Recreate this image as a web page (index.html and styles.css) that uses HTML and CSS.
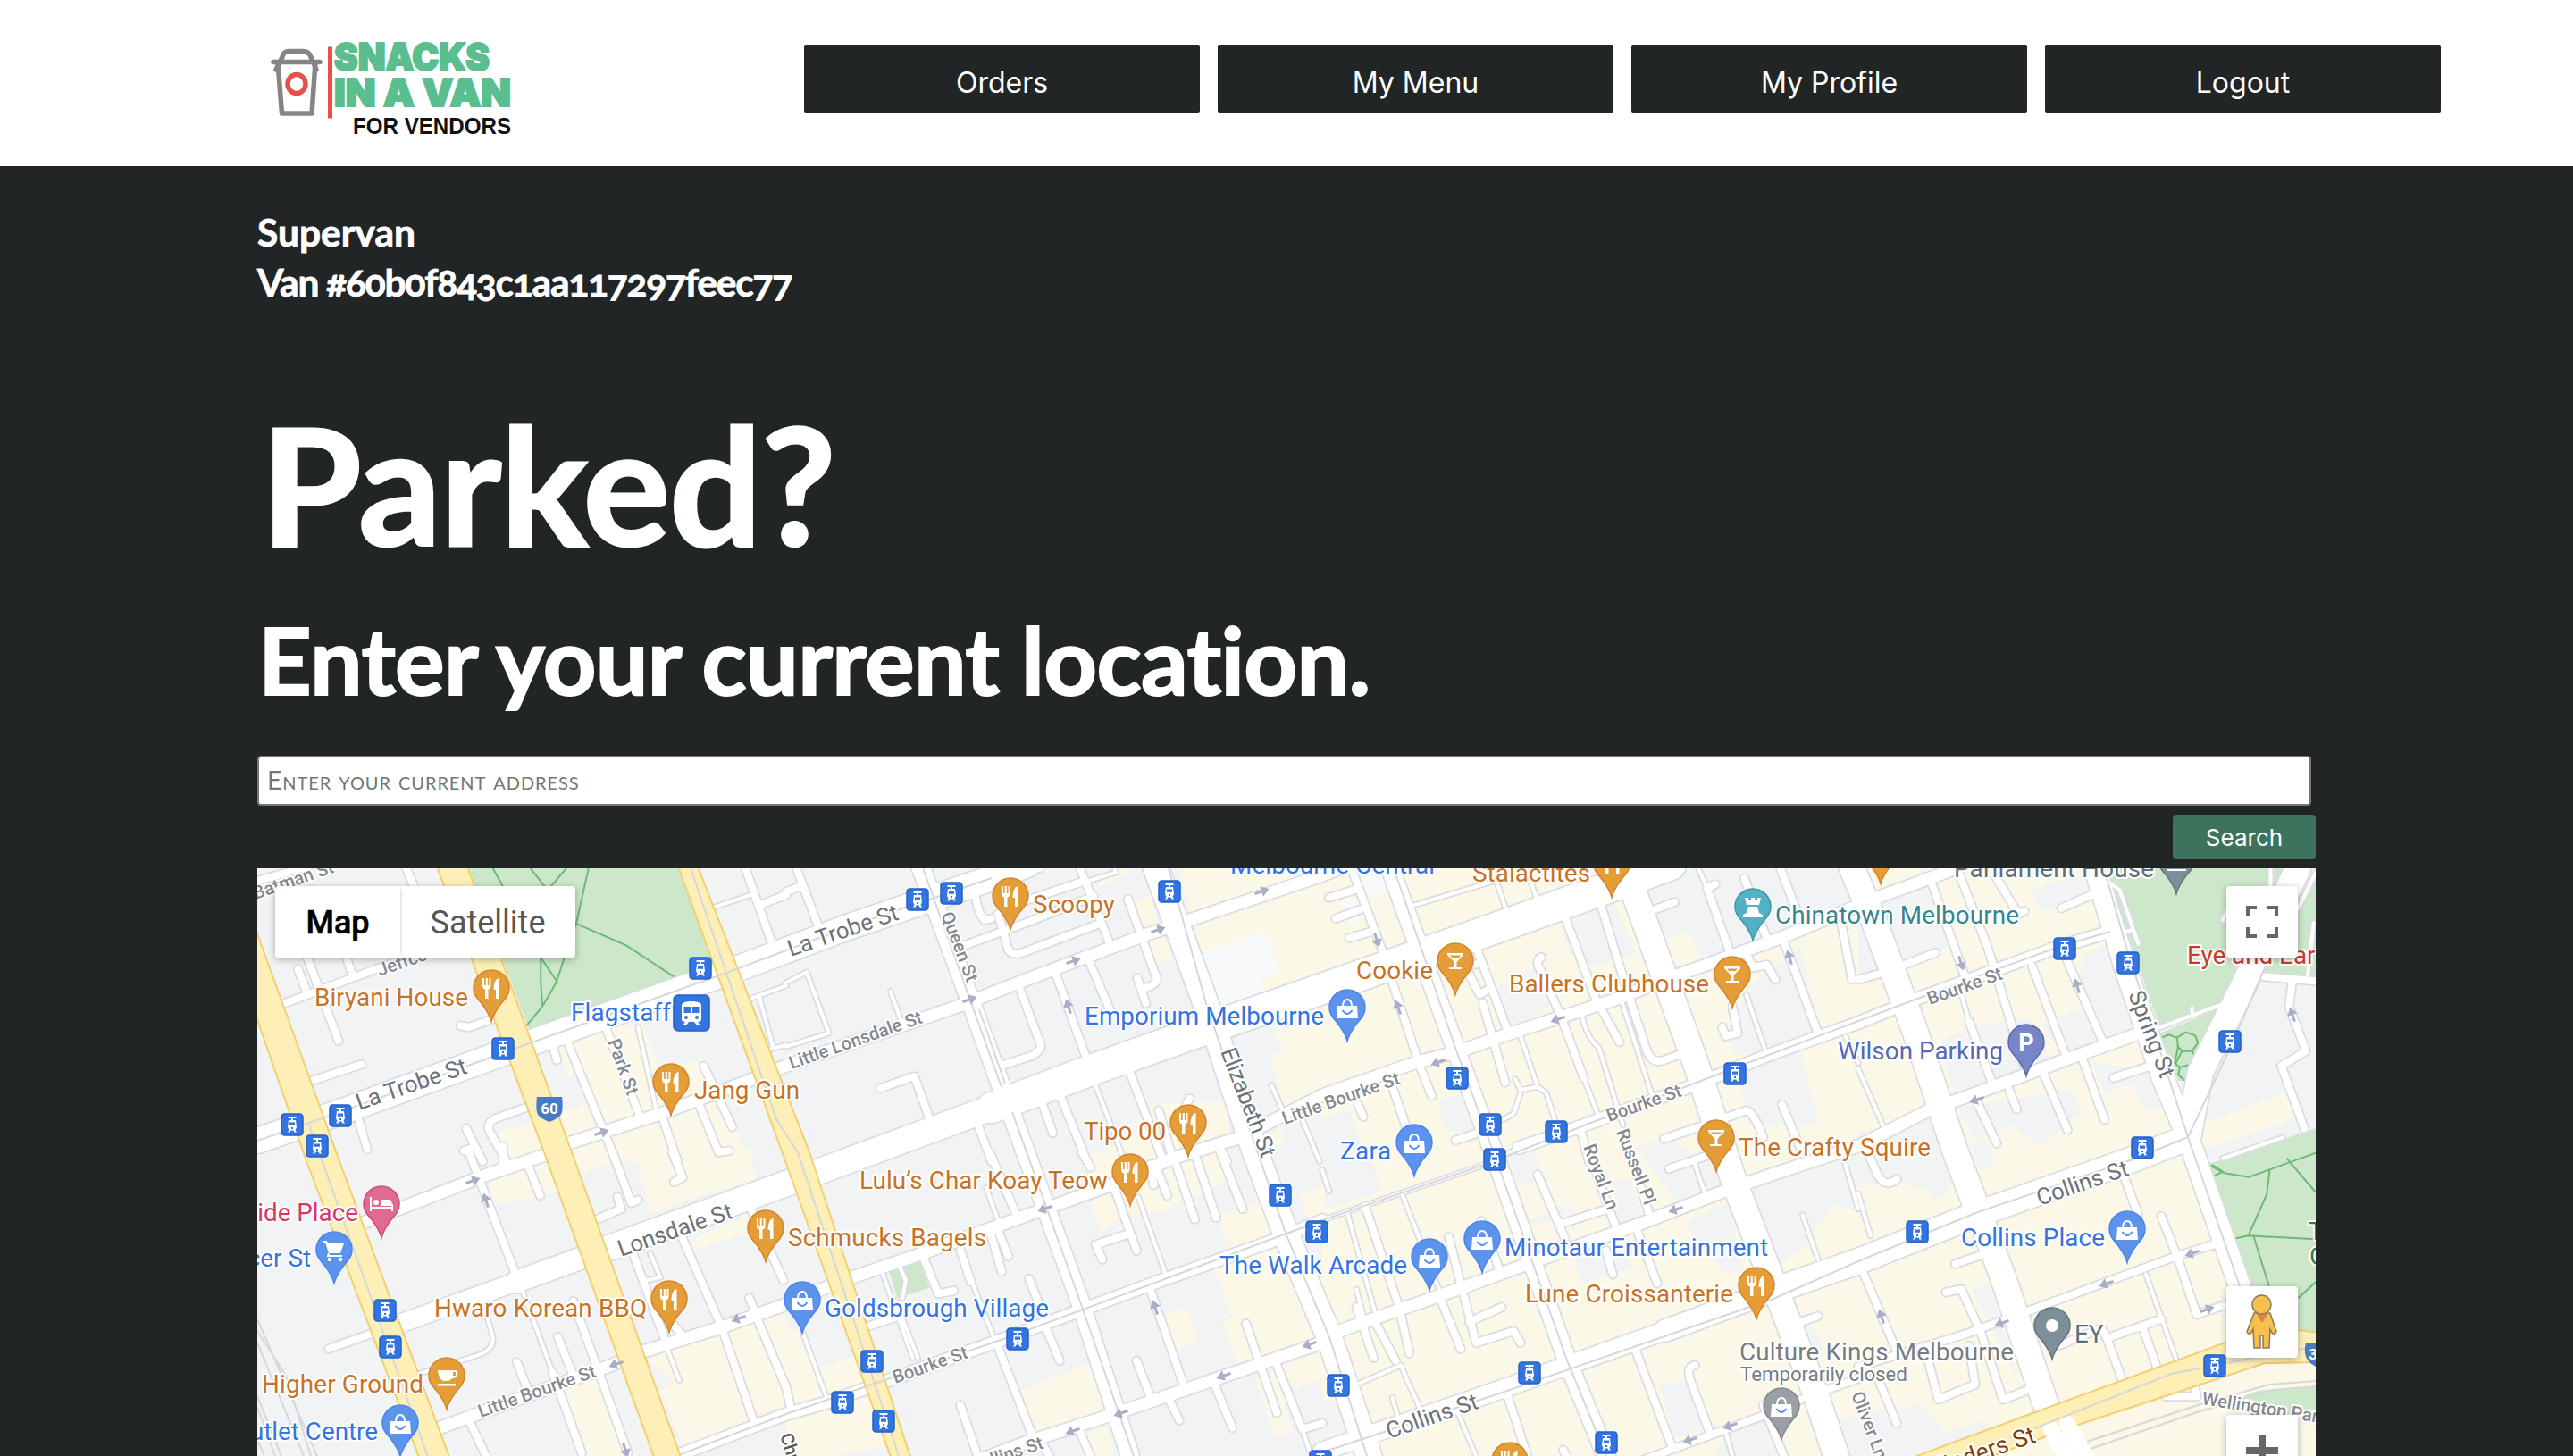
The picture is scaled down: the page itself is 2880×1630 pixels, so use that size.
FILE: index.html
```html
<!DOCTYPE html>
<html lang="en">
<head>
<meta charset="utf-8">
<title>Snacks in a Van - Vendors</title>
<link rel="stylesheet" href="styles.css">
</head>
<body>
<header class="header">
  <svg class="logo" viewBox="288 30 300 130" role="img" aria-label="Snacks in a Van for vendors">
    <g class="cup">
      <path d="M309 78 L316 64 Q317 57.500 324 57.500 H339 Q346 57.500 348 64 L354 78"/>
      <path d="M306 69.500 H358"/>
      <path d="M311 70 L315.500 127 H349 L353 70"/>
    </g>
    <ellipse class="cup-dot" cx="332" cy="94" rx="10" ry="10.500"/>
    <rect class="bar" x="367" y="52.500" width="5" height="80"/>
    <text class="brand" x="374" y="79" textLength="174" lengthAdjust="spacingAndGlyphs">SNACKS</text>
    <text class="brand" x="374" y="119" textLength="198" lengthAdjust="spacingAndGlyphs">IN A VAN</text>
    <text class="tagline" x="395" y="149.500" textLength="177" lengthAdjust="spacingAndGlyphs">FOR VENDORS</text>
  </svg>
  <nav class="nav">
    <a class="nav-item">Orders</a>
    <a class="nav-item">My Menu</a>
    <a class="nav-item">My Profile</a>
    <a class="nav-item">Logout</a>
  </nav>
</header>
<main class="content">
  <h3 class="van">Supervan<br><span class="van-id">Van #60b0f843c1aa117297feec77</span></h3>
  <h1 class="title">Parked?</h1>
  <h2 class="subtitle">Enter your current location.</h2>
  <input class="address" type="text" placeholder="Enter your current address">
  <button class="search">Search</button>
  <section class="map">
    <svg class="map-canvas" viewBox="288 972 2304 658">
      <defs>
        <path id="pin" d="M0 37.500 C-2 30 -5 26 -9 20 C-14 13 -20 9 -20 0 A20 20 0 0 1 20 0 C20 9 14 13 9 20 C5 26 2 30 0 37.500Z"/>
        <g id="food"><path d="M-10 -11 V-3 Q-10 1 -7 1.500 V12 H-3.500 V1.500 Q-.5 1 -.5 -3 V-11 H-2.500 V-3 H-4.200 V-11 H-6.300 V-3 H-8 V-11Z M8 -11 Q2.500 -9 2.500 2 H5 V12 H8.500 V-11Z"/></g>
        <g id="drink"><path d="M-9 -9 H9 V-7 L1.500 1 V7 H7 V9 H-7 V7 H-1.500 V1 L-9 -7Z"/><path class="cut" d="M-6 -6.500 H6 L4 -4 H-4Z"/></g>
        <g id="bag"><path d="M-11 -2 H11 L12 12 H-12Z"/><path class="line" d="M-5 -1 Q-5 -9 0 -9 Q5 -9 5 -1"/><path class="smile" d="M-5.500 3 Q0 11 5.500 3"/></g>
        <g id="cart"><path d="M-12 -10 H-8 L-7 -7 H11 L7 4 H-6 L-10 -8 H-12Z"/><path class="line" d="M-6 4 L-7 7 H9"/><circle cx="-5" cy="11" r="2.300"/><circle cx="7" cy="11" r="2.300"/></g>
        <g id="bed"><path d="M-13 -8 H-11 V3 H11 V0 H13 V8 H11 V6 H-11 V8 H-13Z M-1 2 V-5 H8 Q12 -5 12 2Z"/><circle cx="-6" cy="-2" r="3"/></g>
        <g id="coffee"><path d="M-10 -6 H11 Q13 -6 12 0 Q11 3 6 3 Q4 6 0 6 H-3 Q-9 5 -10 -6Z M-10 9 H10 V11.500 H-10Z"/><path class="cut" d="M7 -4 H10 V0 H7Z"/></g>
        <g id="castle"><path d="M-9 -10 H-5 V-7 H-2 V-10 H2 V-7 H5 V-10 H9 L7 -2 H-7Z M-5 0 H5 L7 7 L11 9 V12 H-11 V9 L-7 7Z"/></g>
        <g id="tram"><rect class="tram-box" x="-12" y="-12" width="24" height="24" rx="3.500"/><path class="glyph" fill-rule="evenodd" d="M-4.500 -9 H4.500 V-7 H1 V-5 H4 L5 3 L3.500 6 L5 8.500 H2.500 L1.500 6.500 H-1.500 L-2.500 8.500 H-5 L-3.500 6 L-5 3 L-4 -5 H-1 V-7 H-4.500Z M-3 -2.500 V.8 H3 V-2.500Z M-1 3 V5 H1 V3Z"/></g>
        <path id="way" d="M-8 -1.500 H0 V-6 L9 0 L0 6 V1.500 H-8Z"/>
      </defs>

      <rect class="land" x="288" y="972" width="2304" height="658"/>

      <!-- retail blocks and parks, one group per map tile -->
      <g transform="translate(280 960) scale(.38265 .33333)">
        <path class="retail" d="M1000 580 1150 560 1195 700 1335 680 1460 1020H760L725 925 990 825 960 720 930 740 900 640 1000 600Z"/>
        <path class="park" d="M638 36H1255L1362 365 820 590Z"/>
        <path class="trail" d="M710 36 760 140M820 36 870 110 925 36M990 36 955 215 895 420 855 500 808 565M850 300V420L855 500M840 320 900 420M950 220 1100 295 1252 410"/>
      </g>
      <g transform="translate(280 1290) scale(.38265 .33333)">
        <path class="retail" d="M690 60 720 40 880 10 900 135 785 165 710 175ZM970 80 1130 30 1460 -20 1480 90 1300 150 1170 210 1135 35ZM1290 290 1470 210 1480 260 1300 330ZM890 800 1030 740 1130 1020H960ZM1160 690 1568 540V880L1270 1000 1200 800 1240 780ZM725 -60 1200 -40 960 80 740 -20Z"/>
      </g>
      <g transform="translate(880 960) scale(.38265 .33333)">
        <path class="retail" d="M950 36H1000L990 60 910 100ZM1010 150 1060 130 1130 340 1060 370ZM1150 36H1568V390L1400 450 1385 410 1440 385 1405 245 1215 320 1190 220ZM1420 590 1568 530V820L1460 850 1415 670 1460 640ZM1065 830 1280 820 1300 930 1200 1020H880L980 950ZM1400 930 1450 910 1460 960 1410 980Z"/>
        <path class="mall" d="M1215 320 1405 245 1440 385 1385 410 1400 450 1270 500Z"/>
      </g>
      <g transform="translate(880 1290) scale(.38265 .33333)">
        <path class="retail" d="M885 0H1290L1300 90 1100 200 1010 210 920 265 885 150ZM1265 210 1400 160 1440 280 1290 320ZM1500 140 1568 110V240L1530 250ZM1250 390 1440 320 1540 620 1320 710 1275 570 1305 555ZM1105 545 1170 515 1205 630 1145 660ZM685 800 880 710 945 870 730 950ZM0 590 40 600 110 830 0 870ZM95 725 210 680 240 780 125 820ZM0 900 240 820 290 990 120 1020H0ZM1370 760 1440 730 1480 940 1430 950ZM1450 720 1568 670V760L1490 800ZM870 950 940 920 960 1020H890Z"/>
        <path class="park" d="M300 395 390 360 418 455 325 490Z"/>
      </g>
      <g transform="translate(1480 960) scale(.38265 .33333)">
        <path class="retail" d="M0 36H1568V1020H0Z"/>
        <path class="land" d="M710 200 840 130 920 320 780 370 710 300ZM500 440 640 360 690 480 550 580ZM930 90 1080 36H1568V180L1350 270 1200 330 1000 390ZM1240 440 1400 300 1460 590 1210 670 1190 620ZM1210 690 1400 650 1450 900 1250 900ZM340 820 420 790 460 920 360 920ZM0 880 80 850 130 1020H0ZM890 990 1000 940 1100 1000 900 1020Z"/>
        <path class="retail" d="M1000 280 1075 250 1110 340 1020 370ZM1400 320 1568 250V560L1460 590Z"/>
        <path class="mall" d="M100 36H170L190 110 120 130ZM50 150 95 140 110 230 80 230Z"/>
      </g>
      <g transform="translate(1480 1290) scale(.38265 .33333)">
        <path class="retail" d="M0 0H1568V1020H0Z"/>
        <path class="land" d="M0 0H140L170 130 10 190ZM540 0H620L650 90 570 110ZM600 230 730 175 740 205 610 245ZM720 300 850 250 910 390 760 440ZM850 100 900 90 940 220 870 240ZM930 0H1180V110L1040 170ZM1060 240 1190 170 1230 400 1170 400ZM1240 100 1520 0H1568V200L1500 170 1400 330 1330 380ZM0 840 50 830 80 960 0 1000ZM985 780 1070 770 1120 930 1030 960ZM1180 940 1300 900 1340 1020H1150ZM1410 590 1440 580 1470 680 1440 670ZM1520 900 1568 880V1020H1530Z"/>
      </g>
      <g transform="translate(2080 900) scale(.34439 .33333)">
        <path class="retail" d="M0 216H780L1060 1120 1000 1170H0Z"/>
        <path class="land" d="M75 335 220 280 300 480 150 530ZM560 290 720 240 760 310 590 360ZM740 500 820 470 930 760 810 810 710 590ZM590 740 720 690 780 800 680 850ZM260 800 390 740 560 720 640 880 320 990ZM320 1020 700 960 720 1040 590 1150 500 1080 380 1130ZM760 870 980 900 1010 1020 930 1030 890 940 800 970ZM0 1100 230 1060 330 1170H0ZM0 380 60 360 120 540 0 580Z"/>
        <path class="park" d="M790 216H1395L1240 560 1190 670 980 750 890 480 820 300ZM1487 216V590L1310 565 1430 330ZM980 770 1190 680 1080 930 1040 930Z"/>
        <path class="retail" d="M1100 1080 1390 970 1420 1060 1090 1170H1060Z"/>
        <path class="trail" d="M985 785 1010 775 1035 785 1040 815 1028 870 1045 885 1040 910 1065 932 1085 910 1095 885 1072 877 1045 885M1035 785 1065 767 1095 778 1104 802 1085 830H1052L1035 810M1085 830 1102 865 1095 885M1052 830 1030 875"/>
      </g>
      <g transform="translate(2080 1280) scale(.34439 .33333)">
        <path class="retail" d="M0 0H1070L1250 600 1487 632V820L800 1050H0Z"/>
        <path class="land" d="M0 -20H270L305 130 270 180 240 185 225 145 190 155 170 130 0 140ZM360 0H430L445 70 400 90ZM370 490 425 470 550 900 500 760ZM0 910 210 875 280 970 410 930 430 960 170 1050H0Z"/>
        <path class="park" d="M1135 70 1487 -50V635L1430 628 1260 480ZM1250 850 1300 830 1487 815V900L1400 910Z"/>
        <path class="retail" d="M720 1050 1180 880 1487 950V1050Z"/>
        <path class="trail" d="M1140 72 1190 100 1270 113 1487 32M1392 50 1487 165M1337 90 1328 170 1268 310 1487 322M1268 310 1222 320M1285 312 1335 480M1487 465 1430 520M1155 110 1185 95 1150 72"/>
      </g>

      <g id="rails" class="rail">
        <path d="M288 1477 355 1630M288 1503 340 1630M288 1490 320 1540 348 1630M288 1563 315 1630M288 1575 308 1630M288 1612 296 1630M2336 1614 2460 1573 2540 1550 2592 1546M2340 1622 2462 1580 2544 1556 2592 1552"/>
      </g>

      <!-- streets: painted once as casing, once as surface -->
      <g class="casing"><g id="streets" class="street">
        <g class="alley">
          <g transform="translate(280 960) scale(.38265 .33333)">
            <path d="M100 490 380 370 700 240M0 85 170 30M165 330 258 615M140 375 165 450M280 330 300 400M455 30 480 100M615 565 640 570 715 540M180 750 325 695M310 850 342 980M820 835 720 875Q690 890 700 920L750 1020M632 910 680 1020M625 985 650 975M885 630 897 680M925 610 1070 1020M1040 570 1140 870M1205 870 1250 1020M1327 700 1410 905M1310 820 1370 990 1400 985M1450 40 1530 300M1490 160 1568 125"/>
            <path class="thin" d="M1135 570 1190 860M1350 170 1465 125M1450 480 1568 430M1490 470 1530 640M1500 650 1568 630"/>
          </g>
          <g transform="translate(280 1290) scale(.38265 .33333)">
            <path d="M230 660 400 590M640 0 780 420M740 -20 740 40M815 50 848 145M1060 0 1115 170 1135 160M1075 150 1085 190 1015 225M1235 0 1265 85 1240 100M1120 340 1220 650M1265 290 1380 590 1475 910M1225 560 1260 610M1465 190 1560 430M1480 550 1568 790M1460 490 1475 530M885 740 970 1010M945 500 1105 1010M900 620 945 750M780 705 820 820M640 900 690 1020"/>
            <path class="thin" d="M1170 340 1200 420 1160 430M1220 660 1255 765M795 460 885 740M690 540 710 620Q715 660 670 680L490 745"/>
          </g>
          <g transform="translate(880 960) scale(.38265 .33333)">
            <path d="M30 36 100 250M0 115 45 95M550 105Q560 190 580 210L600 205M620 190 650 310Q660 330 690 320L910 225M510 300 700 220 900 130M700 145 870 80M860 36 950 300M530 110 740 36M1000 140 1085 410Q1080 430 1045 440M1027 405 1052 490M275 775 375 735 420 880M680 430 745 630Q745 650 720 665L640 695M790 395 880 680M885 345 950 520M750 830 780 925M805 810 880 1020M1005 720 1100 1010M1090 850 1130 1010M1180 810 1170 830 1200 930M1260 960 1290 1020M565 910 600 1020"/>
            <path class="thin" d="M305 450 340 560M0 420 60 385 125 590 0 635M880 80 965 50 960 36M905 765 990 1020M1420 765 1460 870M1510 880 1560 1020"/>
          </g>
          <g transform="translate(880 1290) scale(.38265 .33333)">
            <path d="M595 0 670 200M615 250 650 350M595 260 630 400M510 330 540 435M400 350 445 475 490 465M225 590 330 550M710 425 740 510M615 640 730 980M760 590 800 700M510 850 560 1020M0 790 15 870M865 0 890 50M960 120 1025 330M1000 275 905 310 925 360M1065 460 1165 790M1025 700 1065 820M1120 830 1150 900M1250 770 1305 925M1345 575 1435 875M1430 700 1510 930 1568 910M1065 40 1075 110M1085 60 1115 145M1140 40 1195 225M1200 20 1258 220M1270 0 1335 190M860 940 890 1020M750 980 770 1020"/>
            <path class="thin" d="M585 120 620 230M545 440 610 630M330 380 350 430 340 490M280 400 370 690M320 500 385 690M50 610 120 830M1030 150 1110 410M1510 930 1530 1000"/>
          </g>
          <g transform="translate(1480 960) scale(.38265 .33333)">
            <path d="M85 36 175 310M200 400 285 700 320 800M20 135 90 110M40 205 110 175M80 270 140 250M705 185 800 475 870 620M810 140 890 440 950 650Q965 695 1000 680L1050 660M450 300 545 590M425 380 460 460 490 440M440 360 465 355M470 490 535 755M640 335Q620 350 640 380L700 540 765 740M390 950 480 915M205 770 250 920M105 830 120 870M960 180 1030 150M1125 100 1190 310M1130 100 1150 90M1235 70 1300 270M1340 36 1385 170M1240 320 1260 370 1300 360 1325 410M1350 280 1450 590M1200 500 1215 590 1180 600 1170 570M1000 945 1240 850Q1260 850 1290 940M1345 830 1400 980M1520 230 1550 410M755 910 780 1020"/>
            <path class="thin" d="M240 170 500 80M510 80 535 165M610 80 625 130M765 740 805 860M760 530Q770 600 810 640L880 900M875 480 965 800M580 600 630 770 580 780 565 745M630 770 655 790 680 880M580 790 560 860 530 880M1240 460 1300 660M1100 36 1125 100M1530 600 1568 690"/>
          </g>
          <g transform="translate(1480 1290) scale(.38265 .33333)">
            <path d="M125 180 225 520 255 675M345 490 405 660M150 560 215 700M370 285 450 640 560 600 580 640M430 570 525 520M465 230 520 400M100 520 150 690M540 810 600 1020M630 75 710 290M700 240 835 190M780 0 865 270M900 0 960 220M920 260 980 440M830 330 850 410M915 660 1020 980M1090 715Q1065 720 1075 760L1130 930M705 1000 715 1020M1015 55 1130 10M1400 570 1450 550M900 1050 1300 880 1400 830M1290 850 1350 1020M1470 800 1568 760 1590 750"/>
            <path class="thin" d="M75 210 160 560M235 145 345 470M100 460 120 550M100 780 230 715 250 770 290 870M205 825 225 900M395 870 450 1020M1090 40 1120 140M1405 210 1450 360M1530 40 1568 190M1180 940 1200 1020M0 60 20 130"/>
          </g>
          <g transform="translate(2080 900) scale(.34439 .33333)">
            <path d="M240 270 350 590M360 730 440 950M330 240 420 480 540 880M450 250 520 370 540 360M660 350 770 300M150 540 250 500M565 545 680 860M680 530 800 810M730 860 800 1060M600 900 680 1095M490 960 515 1025M390 1010 450 1140M830 920 950 880M0 590 70 570M1320 580 1487 595M1410 600 1400 680 1455 830 1375 880 1450 1090"/>
            <path class="thin" d="M330 620 360 730M0 890 80 1080M810 260 850 290 910 470M860 430 885 425M1487 230 1430 350M1480 400 1460 580M1340 216V280M1185 390 1200 360M1085 685V700M930 770 1190 670"/>
          </g>
          <g transform="translate(2080 1280) scale(.34439 .33333)">
            <path d="M30 30 65 110Q90 150 125 120M10 420 130 710M60 780 125 940M315 405 400 375M285 500 335 490 400 640 470 860 560 825M230 740 260 860 380 810 360 680M0 750 350 640 560 560 1030 380 1170 335M860 100 910 240M985 245 1040 390 1100 575 1200 540M650 680 790 620 810 660 860 800M820 650 985 590M925 620 970 750M1090 800 1100 850 1000 850"/>
            <path class="thin" d="M0 170 40 310M935 440 1035 730M1185 50 1380 -20"/>
          </g>
        </g>
        <!-- little streets -->
        <path class="lane" d="M404 1370 540 1317 610 1293M636 1280 739 1247 846 1207 880 1193 1071 1127 1148 1097 1278 1048 1480 980 1510 968M488 1600 685 1528 720 1513 804 1487 880 1460 945 1433 1033 1403 1159 1357 1240 1328 1312 1297 1389 1273 1480 1226 1583 1190 1633 1177 1690 1157 1805 1120 1874 1093 1993 1050 2106 1003 2190 972M1100 1633 1148 1615 1247 1583 1480 1503 1499 1490 1641 1440 1710 1415 1836 1370 1931 1333 1977 1317 2080 1283 2159 1243 2214 1223 2321 1183 2400 1155"/>
        <path class="lane" d="M762 1628 880 1583 926 1570 1129 1497 1209 1467 1301 1433 1431 1387 1480 1366M1700 1285 1786 1255 1901 1213 1977 1182 2080 1145 2149 1117 2242 1083 2304 1060 2362 1043"/>
        <path class="thin" d="M1480 1366 1664 1303 1700 1285"/>
        <!-- main streets -->
        <path class="w20" d="M1031 972 1086 1120 1121 1217 1148 1290 1209 1457 1265 1630M1556 972 1629 1173 1679 1310 1754 1523 1798 1630M433 1487 578 1435M1480 1625 1522 1610 1687 1553 1756 1528 1863 1490"/>
        <path class="w24" d="M2345 972 2380 1087 2421 1207 2449 1273 2507 1440M578 1435 682 1397M1863 1490 1985 1445"/>
        <path class="w28" d="M288 1277 381 1245 598 1166 816 1088 949 1038 1110 983 1150 968M1294 972 1351 1127 1405 1290 1440 1383 1488 1497 1528 1617 1533 1632M1822 980 1899 1193 1941 1323 1995 1463 2031 1557 2056 1632M682 1397 880 1325 1110 1240M2073 972 2096 1027 2142 1150 2189 1290 2242 1430 2290 1573M2572 972 2513 1100 2463 1200 2449 1275M1985 1445 2080 1412 2211 1360 2390 1297 2445 1275"/>
        <path class="w34" d="M1110 1240 1224 1197 1350 1152 1480 1107 1694 1032 1824 985 1870 968"/>
      </g></g>
      <use href="#streets" class="surface"/>

      <g class="highway">
        <path d="M284 1034 380 1300 504 1634H470L343 1300 284 1130Z"/>
        <path d="M489 970 609 1290 733 1634H763L640 1290 523 970Z"/>
        <path d="M759 970 878 1297 998 1634H1020L906 1290 781 970Z"/>
        <path d="M2140 1632 2275 1582 2491 1503 2572 1489 2596 1492V1525L2535 1526 2442 1557 2326 1595 2225 1632Z"/>
      </g>
      <g class="streets-over surface">
        <path class="w18" d="M2296 1600 2318 1640M2314 1594 2340 1640"/>
      </g>
      <path class="tramline" d="M288 1277 381 1245 598 1166 816 1088 949 1038 1110 983M346 1259 480 1634M773 972 869 1253 893 1290 1006 1630M762 1628 880 1583 1129 1497 1301 1433 1480 1366 1664 1303 1786 1255 1977 1182 2149 1117 2304 1060 2362 1043M1033 972 1121 1217M1096 1130 1125 1213M1133 1245 1209 1457 1269 1630M1308 972 1351 1127 1440 1383 1488 1497 1530 1630M1560 972 1629 1173 1679 1310 1754 1523 1798 1630M1480 1626 1687 1557 1756 1533 1985 1454 2080 1412 2211 1358 2390 1297 2449 1273 2500 1165 2545 1060M2355 972 2380 1060 2449 1273 2507 1440M2250 1610 2430 1538 2592 1507"/>

      <g class="ways">
        <g class="east">
          <use href="#way" transform="translate(673 1268) rotate(-19)"/><use href="#way" transform="translate(529 1322) rotate(-19)"/><use href="#way" transform="translate(1085 1119) rotate(-19)"/><use href="#way" transform="translate(1201 1076) rotate(-19)"/><use href="#way" transform="translate(1296 1041) rotate(-19)"/><use href="#way" transform="translate(1412 998) rotate(-19)"/><use href="#way" transform="translate(2470 1466) rotate(-19)"/>
        </g>
        <g class="west">
          <use href="#way" transform="translate(690 1527) rotate(161)"/><use href="#way" transform="translate(827 1476) rotate(161)"/><use href="#way" transform="translate(1170 1353) rotate(161)"/><use href="#way" transform="translate(1466 1505) rotate(161)"/><use href="#way" transform="translate(1370 1540) rotate(161)"/><use href="#way" transform="translate(1255 1582) rotate(161)"/><use href="#way" transform="translate(1201 1602) rotate(161)"/><use href="#way" transform="translate(1610 1189) rotate(161)"/><use href="#way" transform="translate(1744 1141) rotate(161)"/><use href="#way" transform="translate(1876 1354) rotate(161)"/><use href="#way" transform="translate(1937 1596) rotate(161)"/><use href="#way" transform="translate(1892 1612) rotate(161)"/><use href="#way" transform="translate(2213 1231) rotate(161)"/><use href="#way" transform="translate(2454 1403) rotate(161)"/><use href="#way" transform="translate(2358 1437) rotate(161)"/><use href="#way" transform="translate(2241 1481) rotate(161)"/>
        </g>
        <g class="north-south">
          <use href="#way" transform="translate(544 1344) rotate(-108)"/><use href="#way" transform="translate(1196 1127) rotate(-108)"/><use href="#way" transform="translate(1293 1464) rotate(-108)"/><use href="#way" transform="translate(1565 1128) rotate(-108)"/><use href="#way" transform="translate(2003 1072) rotate(-108)"/><use href="#way" transform="translate(2325 1104) rotate(-108)"/><use href="#way" transform="translate(2566 1136) rotate(-108)"/><use href="#way" transform="translate(2106 1474) rotate(-108)"/><use href="#way" transform="translate(700 1623) rotate(72)"/><use href="#way" transform="translate(1541 1052) rotate(72)"/><use href="#way" transform="translate(2195 1078) rotate(72)"/>
        </g>
      </g>

      <g class="road-label">
        <g class="large">
          <text transform="translate(402 1243) rotate(-19)">La Trobe St</text>
          <text transform="translate(885 1071) rotate(-19)">La Trobe St</text>
          <text transform="translate(1366 1177) rotate(69)" textLength="129">Elizabeth St</text>
          <text transform="translate(695 1407) rotate(-19)" textLength="134">Lonsdale St</text>
          <text transform="translate(2382 1113) rotate(69)" textLength="102">Spring St</text>
          <text transform="translate(1555 1611) rotate(-19)" textLength="107">Collins St</text>
          <text transform="translate(2283 1350) rotate(-19)" textLength="107">Collins St</text>
        </g>
        <g class="small">
          <text transform="translate(286 1007) rotate(-19)">Batman St</text>
          <text transform="translate(425 1093) rotate(-19)">Jeffcott St</text>
          <text transform="translate(886 1197) rotate(-19.500)">Little Lonsdale St</text>
          <text transform="translate(1053 1024) rotate(69)">Queen St</text>
          <text transform="translate(680 1166) rotate(70)">Park St</text>
          <text transform="translate(538 1587) rotate(-19.500)">Little Bourke St</text>
          <text transform="translate(1438 1259) rotate(-19.500)">Little Bourke St</text>
          <text transform="translate(1801 1256) rotate(-19.500)">Bourke St</text>
          <text transform="translate(1002 1549) rotate(-19.500)">Bourke St</text>
          <text transform="translate(2160 1125) rotate(-19.500)">Bourke St</text>
          <text transform="translate(1772 1284) rotate(69)">Royal Ln</text>
          <text transform="translate(1809 1267) rotate(69)">Russell Pl</text>
          <text transform="translate(1169 1621) rotate(-19)" text-anchor="end">Little Collins St</text>
          <text transform="translate(2072 1561) rotate(69)">Oliver Ln</text>
          <text transform="translate(2464 1572) rotate(9)">Wellington Parade</text>
          <text class="dark" transform="translate(873 1607) rotate(72)">Church Ln</text>
        </g>
        <text class="arterial" transform="translate(2280 1614) rotate(-19)" text-anchor="end">Flinders St</text>
      </g>

      <g class="trams">
        <use href="#tram" x="784" y="1084"/><use href="#tram" x="563" y="1174"/><use href="#tram" x="381" y="1249"/><use href="#tram" x="327" y="1259"/><use href="#tram" x="355" y="1283"/><use href="#tram" x="431" y="1467"/><use href="#tram" x="437" y="1508"/><use href="#tram" x="1027" y="1007"/><use href="#tram" x="1065" y="1000"/><use href="#tram" x="1309" y="998"/><use href="#tram" x="1139" y="1499"/><use href="#tram" x="976" y="1524"/><use href="#tram" x="943" y="1570"/><use href="#tram" x="989" y="1591"/><use href="#tram" x="1433" y="1338"/><use href="#tram" x="1474" y="1379"/><use href="#tram" x="1631" y="1207"/><use href="#tram" x="1668" y="1259"/><use href="#tram" x="1673" y="1298"/><use href="#tram" x="1742" y="1267"/><use href="#tram" x="1942" y="1202"/><use href="#tram" x="1498" y="1551"/><use href="#tram" x="1712" y="1537"/><use href="#tram" x="1798" y="1615"/><use href="#tram" x="1478" y="1636"/><use href="#tram" x="2311" y="1062"/><use href="#tram" x="2382" y="1078"/><use href="#tram" x="2496" y="1166"/><use href="#tram" x="2398" y="1285"/><use href="#tram" x="2146" y="1379"/><use href="#tram" x="2479" y="1529"/>
      </g>
      <g transform="translate(774 1134)">
        <rect class="tram-box" x="-20" y="-20" width="40" height="40" rx="5"/>
        <path class="glyph" fill-rule="evenodd" d="M-11 -9 Q-10 -13 0 -13 Q10 -13 11 -9 V7 Q11 10 7 10 L10 14 H6 L3 10 H-3 L-6 14 H-10 L-7 10 Q-11 10 -11 7Z M-8.500 -7 V0 H-1 V-7Z M1 -7 V0 H8.500 V-7Z M-8 5 a2 2 0 1 0 4 0 a2 2 0 1 0 -4 0 M4 5 a2 2 0 1 0 4 0 a2 2 0 1 0 -4 0"/>
      </g>
      <g class="shield"><path d="M601 1228H629Q631 1245 627 1249Q623 1253 615 1256Q607 1253 603 1249Q599 1245 601 1228Z"/><text x="615" y="1247" text-anchor="middle">60</text><path d="M2581 1503H2611V1530H2592Q2576 1522 2581 1503Z"/><text x="2584" y="1522">30</text></g>

      <g class="pins">
        <g class="orange">
          <g transform="translate(550 1106)"><use href="#pin"/><use href="#food" class="glyph"/></g>
          <g transform="translate(751 1211)"><use href="#pin"/><use href="#food" class="glyph"/></g>
          <g transform="translate(857 1375)"><use href="#pin"/><use href="#food" class="glyph"/></g>
          <g transform="translate(749 1454)"><use href="#pin"/><use href="#food" class="glyph"/></g>
          <g transform="translate(1131 1003)"><use href="#pin"/><use href="#food" class="glyph"/></g>
          <g transform="translate(1330 1257)"><use href="#pin"/><use href="#food" class="glyph"/></g>
          <g transform="translate(1265 1312)"><use href="#pin"/><use href="#food" class="glyph"/></g>
          <g transform="translate(1966 1439)"><use href="#pin"/><use href="#food" class="glyph"/></g>
          <g transform="translate(1804 967)"><use href="#pin"/><use href="#food" class="glyph"/></g>
          <g transform="translate(1690 1635)"><use href="#pin"/><use href="#food" class="glyph"/></g>
          <g transform="translate(2105 952)"><use href="#pin"/></g>
          <g transform="translate(500 1540)"><use href="#pin"/><use href="#coffee" class="glyph"/></g>
          <g transform="translate(1629 1076)"><use href="#pin"/><use href="#drink" class="glyph"/></g>
          <g transform="translate(1939 1091)"><use href="#pin"/><use href="#drink" class="glyph"/></g>
          <g transform="translate(1921 1274)"><use href="#pin"/><use href="#drink" class="glyph"/></g>
        </g>
        <g class="blue">
          <g transform="translate(448 1593)"><use href="#pin"/><use href="#bag" class="glyph"/></g>
          <g transform="translate(898 1455)"><use href="#pin"/><use href="#bag" class="glyph"/></g>
          <g transform="translate(1508 1128)"><use href="#pin"/><use href="#bag" class="glyph"/></g>
          <g transform="translate(1583 1279)"><use href="#pin"/><use href="#bag" class="glyph"/></g>
          <g transform="translate(1600 1407)"><use href="#pin"/><use href="#bag" class="glyph"/></g>
          <g transform="translate(1659 1387)"><use href="#pin"/><use href="#bag" class="glyph"/></g>
          <g transform="translate(2381 1376)"><use href="#pin"/><use href="#bag" class="glyph"/></g>
          <g transform="translate(374 1399)"><use href="#pin"/><use href="#cart" class="glyph"/></g>
        </g>
        <g class="gray" transform="translate(1994 1574)"><use href="#pin"/><use href="#bag" class="glyph"/></g>
        <g class="pink" transform="translate(427 1348)"><use href="#pin"/><use href="#bed" class="glyph"/></g>
        <g class="teal" transform="translate(1962 1015)"><use href="#pin"/><use href="#castle" class="glyph"/></g>
        <g class="indigo" transform="translate(2268 1167)"><use href="#pin"/><text class="p" x="0" y="10" text-anchor="middle">P</text></g>
        <g class="slate" transform="translate(2297 1484)"><use href="#pin"/><circle class="glyph" r="7"/></g>
        <g class="slate" transform="translate(2436 963)"><use href="#pin"/><path class="glyph" d="M-11 10H11V12H-11Z"/></g>
      </g>

      <g class="poi">
        <g class="t-orange">
          <text x="352" y="1126" textLength="172">Biryani House</text><text x="1156" y="1022" textLength="92">Scoopy</text><text x="777" y="1230" textLength="118">Jang Gun</text><text x="1213" y="1276" textLength="92">Tipo 00</text><text x="962" y="1331" textLength="278">Lulu’s Char Koay Teow</text><text x="882" y="1395" textLength="222">Schmucks Bagels</text><text x="486" y="1474" textLength="238">Hwaro Korean BBQ</text><text x="293" y="1559" textLength="181">Higher Ground</text><text x="1518" y="1096" textLength="86">Cookie</text><text x="1689" y="1111" textLength="224">Ballers Clubhouse</text><text x="1946" y="1294" textLength="215">The Crafty Squire</text><text x="1648" y="987" textLength="132">Stalactites</text><text x="1707" y="1458" textLength="233">Lune Croissanterie</text>
        </g>
        <g class="t-blue">
          <text x="639" y="1143" textLength="112">Flagstaff</text><text x="1214" y="1147" textLength="268">Emporium Melbourne</text><text x="923" y="1474" textLength="251">Goldsbrough Village</text><text x="348" y="1418" text-anchor="end">cer St</text><text x="423" y="1612" text-anchor="end">utlet Centre</text><text x="1500" y="1298" textLength="57">Zara</text><text x="1377" y="978" textLength="229">Melbourne Central</text><text x="1684" y="1406" textLength="295">Minotaur Entertainment</text><text x="1365" y="1426" textLength="210">The Walk Arcade</text><text x="2195" y="1395" textLength="161">Collins Place</text>
        </g>
        <text class="t-pink" x="401" y="1367" text-anchor="end">ide Place</text>
        <text class="t-teal" x="1987" y="1034" textLength="273">Chinatown Melbourne</text>
        <text class="t-indigo" x="2057" y="1186" textLength="185">Wilson Parking</text>
        <text class="t-slate" x="2187" y="982" textLength="224">Parliament House</text>
        <text class="t-slate" x="2322" y="1503">EY</text>
        <text class="t-red" x="2448" y="1079">Eye and Ear</text>
        <text class="t-gray" x="1947" y="1523" textLength="307">Culture Kings Melbourne</text>
        <text class="t-gray note" x="1948" y="1546" textLength="187">Temporarily closed</text>
        <text class="t-green" x="2584" y="1388">T</text><text class="t-green" x="2585" y="1416">G</text>
      </g>
    </svg>

    <div class="map-type"><span class="type active">Map</span><span class="type">Satellite</span></div>
    <div class="control fullscreen"><svg viewBox="0 0 36 36"><path d="M0 0H12V4H4V12H0ZM24 0H36V12H32V4H24ZM0 24H4V32H12V36H0ZM32 24H36V36H24V32H32Z"/></svg></div>
    <div class="control pegman"><svg viewBox="0 0 36 62">
      <path class="peg" d="M9 21H27L34 42Q32 46 29 43L27 39L26 60H19V46H16V60H9L8 39L6 43Q3 46 1 42Z"/><path class="peg-scarf" d="M11 21H25L18 32Z"/><circle class="peg" cx="17.500" cy="11.500" r="10.500"/></svg></div>
    <div class="control zoom"><svg viewBox="0 0 36 36"><path d="M14 0H22V14H36V22H22V36H14V22H0V14H14Z"/></svg></div>
  </section>
</main>
</body>
</html>
```
FILE: styles.css
```css
* { box-sizing: border-box; }
body {
  margin: 0;
  height: 100vh;
  overflow: hidden;
  display: flex;
  flex-direction: column;
  background: #212526;
  color: #fff;
  font-family: Lato, sans-serif;
}

.header {
  flex: none;
  height: 186px;
  padding: 30px 148px 0 288px;
  display: flex;
  justify-content: space-between;
  align-items: flex-start;
  background: #fff;
}
.logo { width: 300px; height: 130px; }
.cup { fill: none; stroke: #858585; stroke-width: 5.5; stroke-linecap: round; stroke-linejoin: round; }
.cup-dot { fill: none; stroke: #e8504a; stroke-width: 5.5; }
.bar { fill: #e8504a; }
.brand { font: 900 42px Inter, sans-serif; fill: #5abe8f; stroke: #5abe8f; stroke-width: 2; }
.tagline { font: bold 25px "Liberation Sans", sans-serif; fill: #111; }

.nav {
  width: 1832px;
  margin-top: 20px;
  display: grid;
  grid-template-columns: repeat(4, 1fr);
  gap: 20px;
}
.nav-item {
  height: 76px;
  padding-top: 8px;
  display: flex;
  align-items: center;
  justify-content: center;
  background: #212526;
  border-radius: 2px;
  font: 32px Inter, sans-serif;
}

.content {
  flex: 1;
  width: 2304px;
  margin: 0 auto;
  display: flex;
  flex-direction: column;
}
.van { margin: 46px 0 0; font-size: 42.500px; line-height: 56px; font-weight: 700; letter-spacing: 0; white-space: nowrap; -webkit-text-stroke: .8px #fff; }
.van-id { font-feature-settings: "onum"; letter-spacing: -1.2px; }
.title { margin: 87px 0 0 4px; font-size: 182px; line-height: 220px; letter-spacing: -.5px; -webkit-text-stroke: 3px #fff; }
.subtitle { margin: 22px 0 0 1px; font-size: 104px; line-height: 130px; letter-spacing: -.6px; white-space: nowrap; -webkit-text-stroke: 2px #fff; }
.address {
  flex: none;
  width: 2299px;
  height: 56px;
  margin-top: 43px;
  padding: 0 9px 3px;
  border: 2px solid #767676;
  border-radius: 4px;
  background: #fff;
  font: 28.500px Lato, sans-serif;
}
.address::placeholder { color: #757575; opacity: 1; font-variant: small-caps; letter-spacing: .9px; }
.search {
  flex: none;
  align-self: flex-end;
  width: 160px;
  height: 50px;
  margin: 10px 0;
  padding: 0;
  border: 0;
  border-radius: 4px;
  background: #3d735d;
  color: #fff;
  font: 26px Inter, sans-serif;
}

.map { position: relative; flex: none; height: 658px; overflow: hidden; color: #000; }
.map-canvas { display: block; width: 2304px; height: 658px; font-family: Roboto, sans-serif; }

.land { fill: #f1f3f5; }
.retail { fill: #fcf8e8; }
.mall { fill: #f8f9fb; }
.park { fill: #cce7c9; }
.trail { fill: none; stroke: #6fb978; stroke-width: 2; vector-effect: non-scaling-stroke; }
.rail { fill: none; stroke: #d5d7db; stroke-width: 2; }

.street { fill: none; stroke-linecap: round; stroke-linejoin: round; }
.casing { --edge: 3.500px; stroke: #dadce2; }
.surface { --edge: 0px; stroke: #fff; fill: none; }
.street path, .streets-over path { stroke-width: calc(var(--w) + var(--edge)); vector-effect: non-scaling-stroke; }
.alley { --w: 8px; }
.thin { --w: 4px; }
.lane { --w: 13px; }
.w18 { --w: 18px; }
.w20 { --w: 20px; }
.w24 { --w: 24px; }
.w28 { --w: 28px; }
.w34 { --w: 34px; }
.streets-over { stroke-linecap: round; }
.highway { fill: #fdefb6; stroke: #f2cf6f; stroke-width: 2; }
.tramline { fill: none; stroke: #d5d7db; stroke-width: 2; }
.ways { fill: #a9aec6; }

.road-label { fill: #7e8489; stroke: #fff; stroke-width: 4px; stroke-linejoin: round; paint-order: stroke; }
.large { font-size: 25.700px; fill: #6b7278; }
.small { font-size: 20.200px; font-weight: 500; fill: #85898e; }
.small .dark { fill: #5b564a; }
.arterial { font-size: 27px; fill: #7a4310; }

.tram-box { fill: #3375e0; stroke: #2461c5; stroke-width: 1.5; }
.glyph { fill: #fff; }
.line { fill: none; stroke: #fff; stroke-width: 2; }
.smile { fill: none; stroke: #5c93ed; stroke-width: 2; }
.cut { fill: #e59d38; }
.shield { fill: #457bc4; font-size: 17px; font-weight: 700; }
.shield text { fill: #fff; }

.pins use:first-child { stroke-width: 1.5; }
.orange use:first-child { fill: #e59d38; stroke: #d5842e; }
.blue use:first-child { fill: #5c93ed; stroke: #4a85ea; }
.gray use:first-child { fill: #9aa0a5; stroke: #82878b; }
.pink use:first-child { fill: #e06b92; stroke: #d54878; }
.teal use:first-child { fill: #52b1c6; stroke: #3d96a6; }
.indigo use:first-child { fill: #7986c6; stroke: #5868b8; }
.slate use:first-child { fill: #7c8f9a; stroke: #64747f; }
.p { fill: #fff; font-size: 27px; font-weight: 700; }

.poi { font-size: 27.800px; stroke: #fff; stroke-width: 4px; stroke-linejoin: round; paint-order: stroke; }
.t-orange { fill: #c87226; }
.t-blue { fill: #3473e0; }
.t-pink { fill: #d93564; }
.t-teal { fill: #36868f; }
.t-indigo { fill: #5568b9; }
.t-slate { fill: #5a707c; }
.t-red { fill: #cb3c2c; }
.t-gray { fill: #777d82; }
.t-green { fill: #2e7d45; }
.note { font-size: 22.500px; }

.map-type {
  position: absolute;
  left: 20px;
  top: 20px;
  display: flex;
  height: 80px;
  background: #fff;
  border-radius: 4px;
  box-shadow: 0 2px 8px rgba(0, 0, 0, .3);
  font: 36px/82px Roboto, sans-serif;
  color: #565656;
}
.type { width: 196px; text-align: center; }
.type.active { width: 140px; color: #000; font-weight: 500; -webkit-text-stroke: .6px #000; box-shadow: 3px 0 4px -3px rgba(0, 0, 0, .25); }
.control {
  position: absolute;
  right: 20px;
  width: 80px;
  height: 80px;
  display: flex;
  align-items: center;
  justify-content: center;
  background: #fff;
  border-radius: 4px;
  box-shadow: 0 2px 8px rgba(0, 0, 0, .3);
}
.control svg { width: 36px; fill: #666; }
.fullscreen { top: 20px; }
.pegman { top: 468px; }
.zoom { top: 612px; }
.peg { fill: #f6bf4f; stroke: #8a7a58; stroke-width: 1.5; }
.peg-scarf { fill: #d98741; }
```
